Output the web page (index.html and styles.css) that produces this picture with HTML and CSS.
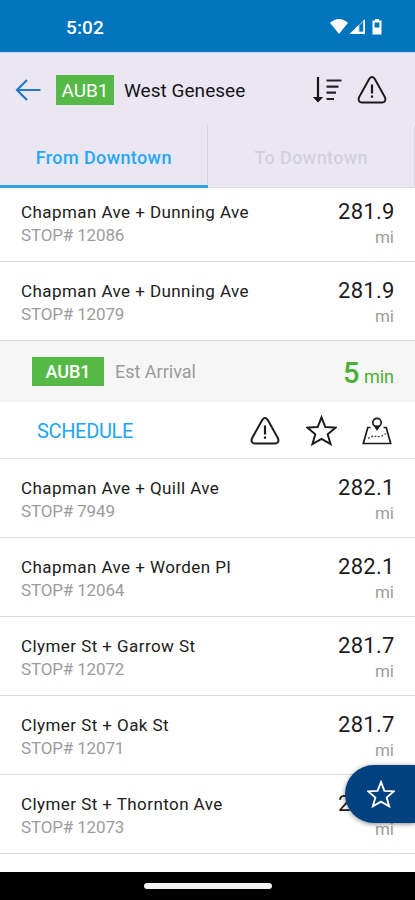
FILE: index.html
```html
<!DOCTYPE html>
<html lang="en">
<head>
<meta charset="utf-8">
<title>West Genesee</title>
<link rel="stylesheet" href="styles.css">
</head>
<body>
<svg class="defs" aria-hidden="true">
  <symbol id="warn" viewBox="0 0 30 28"><path d="M12.3 2.8Q15-.6 17.7 2.8L28 21.3Q29.6 25.9 25.3 26.4H4.7Q.4 25.9 2 21.3Z" fill="none" stroke="currentColor" stroke-width="2"/><path d="M15 8.500v9M15 19.4v2.400" fill="none" stroke="currentColor" stroke-width="2.200"/></symbol>
  <symbol id="star" viewBox="0 0 30 30"><path d="M15 2.2 18.7 11.6 28.7 12.2 21 18.7 23.8 28.2 15 23.2 6.2 28.2 9 18.7 1.3 12.2 11.3 11.6Z" fill="none" stroke="currentColor" stroke-width="var(--star-line)"/></symbol>
</svg>
<div class="phone">
  <div class="status">
    <span class="time">5:02</span>
    <svg class="signals" viewBox="0 0 54 18" width="54" height="18">
      <path d="M0 4.8Q9-2.8 18 4.8L9 16Z" fill="#fff"/>
      <path d="M19.5 16 35 1V16Z" fill="#a9cdea"/><path d="M19.5 16 28.5 7.3V14H35V16Z" fill="#fff"/><path d="M29.5 7.5 33 4V13.5H29.5Z" fill="#0874bb"/><path d="M34.2 2V16" stroke="#fff" stroke-width="1.3"/>
      <path d="M42.5 2.5H45V1h4v1.500h2.500V16.500h-9Z" fill="#fff"/><path d="M44.500 4.500h5v5h-5Z" fill="#0874bb"/>
    </svg>
  </div>
  <header class="bar">
    <svg class="back" viewBox="0 0 26 22" width="26" height="22"><path d="M25.500 11H2M12 1 2 11 12 21" fill="none" stroke="#2477c2" stroke-width="2.200"/></svg>
    <span class="badge">AUB1</span>
    <h1>West Genesee</h1>
    <svg class="sort" viewBox="0 0 30 28" width="30" height="28"><path d="M6 1V24" stroke="#16151a" stroke-width="2.200"/><path d="M.8 21H11.200L6 26.500Z" fill="#16151a"/><path d="M14.500 4.500H29.500M14.500 10.700H26.500M14.500 16.700H24M14.500 23H22" stroke="#242329" stroke-width="2.200"/></svg>
    <svg class="ic bar-warn"><use href="#warn"/></svg>
  </header>
  <nav class="tabs"><span class="tab active">From Downtown</span><span class="tab">To Downtown</span></nav>
  <main class="list">
    <div class="row first"><div class="stop"><b>Chapman Ave + Dunning Ave</b><small>STOP# 12086</small></div><div class="dist"><b>281.9</b><small>mi</small></div></div>
    <div class="row"><div class="stop"><b>Chapman Ave + Dunning Ave</b><small>STOP# 12079</small></div><div class="dist"><b>281.9</b><small>mi</small></div></div>
    <div class="arrival"><span class="badge">AUB1</span><span class="est">Est Arrival</span><span class="mins"><b>5</b> min</span></div>
    <div class="actions">
      <span class="schedule">SCHEDULE</span>
      <svg class="ic"><use href="#warn"/></svg>
      <svg class="star"><use href="#star"/></svg>
      <svg class="map" viewBox="0 0 30 28" width="30" height="28"><path d="M8.500 10.500H5.800L1.300 26.500H28.700L24.200 10.500H21.500" fill="none" stroke="#1b1b1b" stroke-width="1.700"/><circle cx="15" cy="5.500" r="4.200" fill="none" stroke="#1b1b1b" stroke-width="1.700"/><path d="M11.500 8.500H18.500L15 14Z" fill="#1b1b1b"/><path d="M6 21.500Q10 18.500 14 19.500T24 16.500" fill="none" stroke="#555" stroke-width="1.500" stroke-dasharray="2 1.500"/></svg>
    </div>
    <div class="row"><div class="stop"><b>Chapman Ave + Quill Ave</b><small>STOP# 7949</small></div><div class="dist"><b>282.1</b><small>mi</small></div></div>
    <div class="row"><div class="stop"><b>Chapman Ave + Worden Pl</b><small>STOP# 12064</small></div><div class="dist"><b>282.1</b><small>mi</small></div></div>
    <div class="row"><div class="stop"><b>Clymer St + Garrow St</b><small>STOP# 12072</small></div><div class="dist"><b>281.7</b><small>mi</small></div></div>
    <div class="row"><div class="stop"><b>Clymer St + Oak St</b><small>STOP# 12071</small></div><div class="dist"><b>281.7</b><small>mi</small></div></div>
    <div class="row"><div class="stop"><b>Clymer St + Thornton Ave</b><small>STOP# 12073</small></div><div class="dist"><b>2</b><small>mi</small></div></div>
  </main>
  <div class="fab"><svg><use href="#star"/></svg></div>
  <footer class="home"><span></span></footer>
</div>
</body>
</html>
```
FILE: styles.css
```css
* { box-sizing: border-box; }
body { margin: 0; font-family: Roboto, sans-serif; }
svg { display: block; flex: none; }
.defs { width: 0; height: 0; position: absolute; }
.phone { position: relative; width: 415px; height: 900px; display: flex; flex-direction: column; overflow: hidden; background: #fff; }
.status { height: 52px; background: #0075be; display: flex; align-items: center; justify-content: space-between; padding: 3px 31px 0 66px; color: #fff; }
.time { font-size: 19px; font-weight: 500; letter-spacing: .1px; }
.signals { margin-top: -1px; }
.bar { height: 73px; background: #eae7f2; border-top: 1px solid #c6d8ea; display: flex; align-items: center; padding: 2px 28px 0 15px; }
.badge { background: #56b947; color: #fff; display: flex; align-items: center; justify-content: center; }
.bar .badge { width: 58px; height: 30px; margin-left: 15px; font-size: 19px; }
h1 { margin: 0 auto 0 10px; font-size: 19px; font-weight: 400; color: #141318; letter-spacing: .03px; white-space: nowrap; }
.bar-warn { margin-left: 15px; }
.ic { width: 30px; height: 28px; color: #1b1b1b; }
.tabs { height: 63px; background: #eae7f2; display: flex; }
.tab { flex: 1; height: 63px; display: flex; align-items: center; justify-content: center; padding-top: 2px; font-size: 18px; font-weight: 500; letter-spacing: .4px; color: #d2d0d9; background: linear-gradient(#d6d3dd, #d6d3dd) right / 1px 100% no-repeat; border-bottom: 1px solid #dedbe5; }
.tab.active { color: #24a8f5; border-bottom: 3px solid #2ca6e0; padding-top: 4px; }
.list { flex: 1; }
.row { height: 79px; border-bottom: 1px solid #dcdcdc; padding: 18px 21px 0; display: flex; justify-content: space-between; }
.row.first { height: 74px; padding-top: 13px; }
.row b, .row small { display: block; font-weight: 400; white-space: nowrap; }
.stop b { font-size: 17px; line-height: 22px; color: #202020; letter-spacing: .43px; }
.stop small { font-size: 17px; line-height: 24px; color: #9c9c9c; letter-spacing: -.15px; }
.dist { width: 56px; }
.dist b { font-size: 22px; line-height: 24px; margin-top: -1px; color: #1c1c1c; letter-spacing: .3px; }
.dist small { font-size: 17px; line-height: 27px; color: #9c9c9c; text-align: right; }
.arrival { height: 61px; background: #f6f6f6; display: flex; align-items: center; padding: 0 21px 0 32px; }
.arrival .badge { width: 72px; height: 29px; font-size: 18px; font-weight: 500; }
.est { margin-left: 11px; font-size: 18px; color: #9b9b9b; }
.mins { margin-left: auto; padding-top: 2px; font-size: 18px; color: #4bb034; }
.mins b { font-size: 29px; font-weight: 500; }
.actions { height: 57px; border-bottom: 1px solid #e5e5e5; display: flex; align-items: center; padding: 2px 23px 0 37px; }
.schedule { margin-right: auto; font-size: 20px; color: #22a4f4; letter-spacing: -.35px; }
.star { width: 31px; height: 31px; margin: -1px 25px 0 26px; --star-line: 1.9; color: #1b1b1b; }
.fab { position: absolute; right: 0; top: 765px; width: 70px; height: 58px; border-radius: 29px 0 0 29px; background: #02417f; box-shadow: 0 1px 5px #0007; display: flex; align-items: center; padding-left: 22px; color: #fff; }
.fab svg { width: 28px; height: 28px; --star-line: 2; }
.home { height: 28px; background: #000; display: flex; align-items: center; justify-content: center; }
.home span { width: 128px; height: 6px; border-radius: 3px; background: #f2f2f2; }
```
